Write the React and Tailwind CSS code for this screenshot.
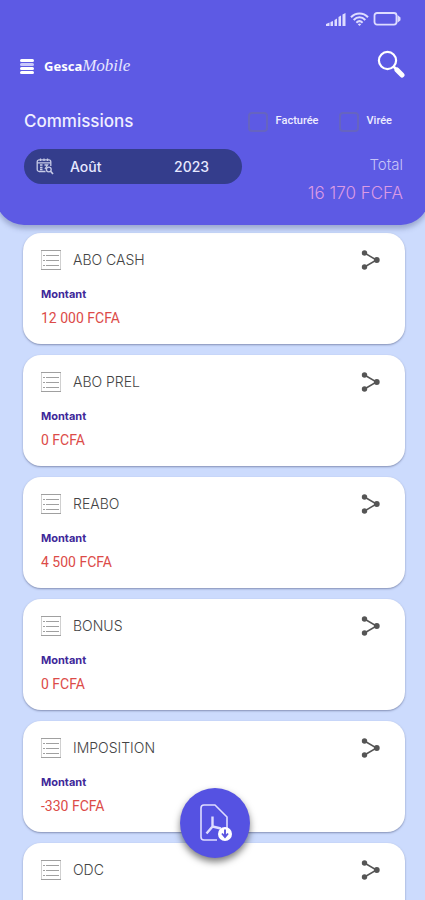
import React from "react";

const commissions = [
  { name: "ABO CASH", amount: "12 000 FCFA" },
  { name: "ABO PREL", amount: "0 FCFA" },
  { name: "REABO", amount: "4 500 FCFA" },
  { name: "BONUS", amount: "0 FCFA" },
  { name: "IMPOSITION", amount: "-330 FCFA" },
  { name: "ODC", amount: "0 FCFA" },
];

function StatusBar() {
  return (
    <div className="flex h-[38px] items-center justify-end gap-1 pr-6 text-[#dedcff]" aria-hidden="true">
      <svg width="20" height="13" viewBox="0 0 20 13" fill="currentColor">
        <path d="M0 13V11L3.500 9.500V13ZM4.500 13V9L7 8V13ZM8.500 13V7L11 5.500V13ZM12.500 13V4L15 2.500V13ZM16.500 13V1.500L19.500 0V13Z" />
      </svg>
      <svg width="19" height="14" viewBox="0 0 19 14" fill="none" stroke="currentColor" strokeWidth="2">
        <path d="M1 5.2C5.8.2 13.2.2 18 5.2" />
        <path d="M3.7 8C7.2 4.4 11.8 4.4 15.3 8" />
        <path d="M6.4 10.7C8.3 8.8 10.7 8.8 12.6 10.7" />
        <path d="M9.5 14L7.8 12.2Q9.5 11 11.2 12.2Z" fill="currentColor" stroke="none" />
      </svg>
      <svg width="28" height="14" viewBox="0 0 28 14" fill="none" stroke="currentColor" strokeWidth="1.8">
        <rect x="1.5" y="1" width="22" height="11.6" rx="2.5" />
        <path d="M24.5 3L27.500 5.500V8.200L24.500 10.700Z" fill="currentColor" stroke="none" />
      </svg>
    </div>
  );
}

function CalendarSearchIcon() {
  return (
    <svg width="18" height="17" viewBox="0 0 18 17" fill="none" stroke="#c6cae6" strokeWidth="1.3" aria-hidden="true">
      <path d="M9.5 13.5H3.2A2 2 0 0 1 1.2 11.500V3.800A2 2 0 0 1 3.200 1.800H12.800A2 2 0 0 1 14.800 3.800V8" />
      <path d="M1.200 4.800H14.800M4.500.5V3M8 .5V3M11.500.5V3" />
      <path d="M4 7H6.500M4 9.500H6.500M4 11.500H6.500M8.500 7H11.500L9 11" />
      <circle cx="12.800" cy="11.500" r="2.400" />
      <path d="M14.600 13.300L17 16" strokeWidth="1.700" />
    </svg>
  );
}

function ListIcon() {
  return (
    <svg width="20" height="20" viewBox="0 0 20 20" fill="none" stroke="#a0a0a0" strokeWidth="1" aria-hidden="true">
      <path d="M.5 0V20M19.500 0V20" stroke="#d0d0d0" />
      <path d="M5 5.5H18M5 10.500H18M5 15.500H18" />
      <path d="M2 5.500H4M2 10.500H4M2 15.500H4" />
      <path d="M0 .5H20M0 19.500H20" />
    </svg>
  );
}

function ShareIcon() {
  return (
    <svg width="20" height="20" viewBox="0 0 20 20" fill="#555" stroke="#555" aria-hidden="true">
      <path d="M3.500 3L15.500 10L3.500 17" fill="none" strokeWidth="1.500" />
      <circle cx="3.500" cy="3" r="2.700" stroke="none" />
      <circle cx="15.800" cy="10" r="2.900" stroke="none" />
      <circle cx="3.500" cy="17" r="2.700" stroke="none" />
    </svg>
  );
}

function PdfIcon() {
  return (
    <svg width="34" height="38" viewBox="0 0 34 38" fill="none" stroke="#dedcff" strokeWidth="1.600" aria-hidden="true">
      <path d="M19 36H6A3 3 0 0 1 3 33V4A3 3 0 0 1 6 1H17L29 13V24" strokeLinejoin="round" />
      <path d="M14.500 12.500V22.500L8.500 29.500M14.500 22.500L23 24.500" strokeWidth="2.400" />
      <circle cx="27" cy="30" r="7" fill="white" stroke="none" />
      <path d="M27 25.500V32M24 29.500L27 33L30 29.500" stroke="#5a55e0" strokeWidth="1.900" />
    </svg>
  );
}

function FilterBox({ label }) {
  return (
    <label className="flex items-center gap-2 font-[Roboto,sans-serif] text-[11px] font-medium text-[#eeedff]">
      <input type="checkbox" className="size-5 appearance-none rounded-sm border-2 border-[#6664c0] checked:bg-[#343d8c]" />
      {label}
    </label>
  );
}

function Header() {
  return (
    <header className="relative z-10 -mx-1 h-[225px] shrink-0 rounded-b-[28px] bg-[#5d5ae4] px-1 shadow-[0_4px_5px_rgba(70,80,130,0.35)]">
      <StatusBar />
      <div className="flex h-14 items-center justify-between px-5">
        <div className="flex items-center gap-2">
          <button type="button" aria-label="Menu" className="flex w-4 flex-col gap-px">
            <span className="h-[3px] w-[14px] rounded-sm bg-white" />
            <span className="h-[3px] w-[14px] rounded-sm bg-[#c9c8fa]" />
            <span className="h-[3px] w-[14px] rounded-sm bg-white" />
            <span className="h-[3px] w-[14px] rounded-sm bg-white" />
          </button>
          <h1 className="flex items-baseline leading-6 text-white">
            <span className="font-['Noto_Sans',sans-serif] text-[13px] font-bold">Gesca</span>
            <span className="font-['Liberation_Serif',serif] text-[17px] text-[#e7e6ff] italic">Mobile</span>
          </h1>
        </div>
        <button type="button" aria-label="Rechercher" className="mb-1">
          <svg width="28" height="28" viewBox="0 0 28 28" fill="none" stroke="white" aria-hidden="true">
            <circle cx="10.500" cy="10.500" r="8.600" strokeWidth="2.200" />
            <path d="M16.500 16.500L19.500 19.500" strokeWidth="2.500" />
            <path d="M20 20L25 25" strokeWidth="5" strokeLinecap="round" />
          </svg>
        </button>
      </div>
      <div className="flex h-[55px] items-center justify-between pr-[33px] pl-6">
        <h2 className="font-[Inter,sans-serif] text-[17px] font-medium text-[#f0efff]">Commissions</h2>
        <div className="flex items-center gap-5">
          <FilterBox label="Facturée" />
          <FilterBox label="Virée" />
        </div>
      </div>
      <div className="flex justify-between pr-[22px] pl-6">
        <div className="flex h-[35px] w-[218px] items-center rounded-full bg-[#343d8c] pr-8 pl-3 font-[Inter,sans-serif] text-sm font-medium text-[#e6e8ff]">
          <CalendarSearchIcon />
          <select aria-label="Mois" defaultValue="Août" className="ml-4 appearance-none bg-transparent">
            <option>Août</option>
          </select>
          <select aria-label="Année" defaultValue="2023" className="ml-auto appearance-none bg-transparent">
            <option>2023</option>
          </select>
        </div>
        <div className="flex flex-col gap-1 pt-1 text-right font-[Inter,sans-serif]">
          <span className="text-[15px] leading-6 font-light text-[#c6c4f8]">Total</span>
          <span className="text-[17px] leading-6 font-light text-[#dc9be4]">16 170 FCFA</span>
        </div>
      </div>
    </header>
  );
}

function CommissionCard({ name, amount }) {
  return (
    <li className="h-[111px] shrink-0 rounded-[18px] bg-white pt-[17px] pr-6 pl-[18px] shadow-[0_1px_2px_rgba(60,70,110,0.5)]">
      <div className="flex items-center gap-3">
        <ListIcon />
        <h3 className="flex-1 font-[Inter,sans-serif] text-sm font-light text-[#444]">{name}</h3>
        <button type="button" aria-label={"Partager " + name}>
          <ShareIcon />
        </button>
      </div>
      <p className="mt-4 font-[Inter,sans-serif] text-[11px] leading-4 font-bold text-[#402899]">Montant</p>
      <p className="mt-[6px] font-[Roboto,sans-serif] text-sm text-[#dc4b48]">{amount}</p>
    </li>
  );
}

export default function App() {
  return (
    <div className="relative flex h-screen flex-col overflow-hidden bg-[#ccdbfd]">
      <Header />
      <main className="min-h-0 flex-1 overflow-hidden">
        <ul className="flex flex-col gap-[11px] pt-2 pr-5 pl-[23px]">
          {commissions.map((item) => (
            <CommissionCard key={item.name} name={item.name} amount={item.amount} />
          ))}
        </ul>
      </main>
      <div className="pointer-events-none absolute inset-x-0 bottom-[42px] z-20 flex justify-center pr-5 pl-6">
        <button
          type="button"
          aria-label="Télécharger le PDF"
          className="pointer-events-auto flex size-[70px] items-center justify-center rounded-full bg-[#5552e2] shadow-[0_4px_7px_rgba(0,0,0,0.5)]"
        >
          <PdfIcon />
        </button>
      </div>
    </div>
  );
}
